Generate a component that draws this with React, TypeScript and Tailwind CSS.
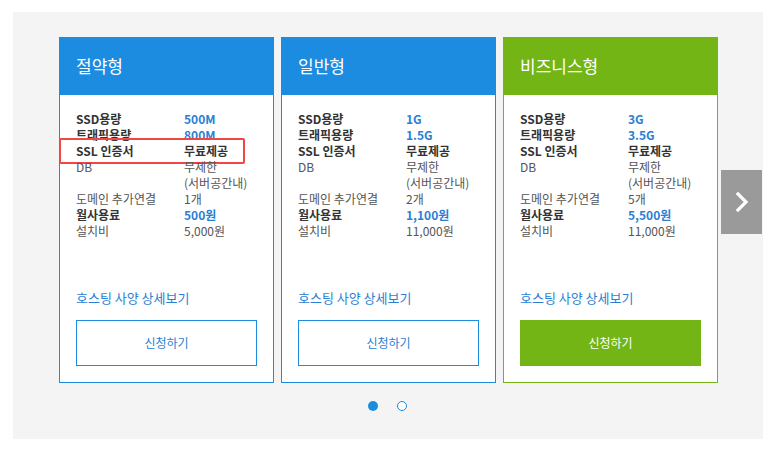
import React from 'react';

type Row = {
  label: string;
  value: string[];
  boldLabel?: boolean;
  valueStyle?: 'blue' | 'dark' | 'normal';
};

type Plan = {
  name: string;
  theme: 'blue' | 'green';
  rows: Row[];
  highlightSsl?: boolean;
};

const plans: Plan[] = [
  {
    name: '절약형',
    theme: 'blue',
    highlightSsl: true,
    rows: [
      { label: 'SSD용량', value: ['500M'], boldLabel: true, valueStyle: 'blue' },
      { label: '트래픽용량', value: ['800M'], boldLabel: true, valueStyle: 'blue' },
      { label: 'SSL 인증서', value: ['무료제공'], boldLabel: true, valueStyle: 'dark' },
      { label: 'DB', value: ['무제한', '(서버공간내)'] },
      { label: '도메인 추가연결', value: ['1개'] },
      { label: '월사용료', value: ['500원'], boldLabel: true, valueStyle: 'blue' },
      { label: '설치비', value: ['5,000원'] },
    ],
  },
  {
    name: '일반형',
    theme: 'blue',
    rows: [
      { label: 'SSD용량', value: ['1G'], boldLabel: true, valueStyle: 'blue' },
      { label: '트래픽용량', value: ['1.5G'], boldLabel: true, valueStyle: 'blue' },
      { label: 'SSL 인증서', value: ['무료제공'], boldLabel: true, valueStyle: 'dark' },
      { label: 'DB', value: ['무제한', '(서버공간내)'] },
      { label: '도메인 추가연결', value: ['2개'] },
      { label: '월사용료', value: ['1,100원'], boldLabel: true, valueStyle: 'blue' },
      { label: '설치비', value: ['11,000원'] },
    ],
  },
  {
    name: '비즈니스형',
    theme: 'green',
    rows: [
      { label: 'SSD용량', value: ['3G'], boldLabel: true, valueStyle: 'blue' },
      { label: '트래픽용량', value: ['3.5G'], boldLabel: true, valueStyle: 'blue' },
      { label: 'SSL 인증서', value: ['무료제공'], boldLabel: true, valueStyle: 'dark' },
      { label: 'DB', value: ['무제한', '(서버공간내)'] },
      { label: '도메인 추가연결', value: ['5개'] },
      { label: '월사용료', value: ['5,500원'], boldLabel: true, valueStyle: 'blue' },
      { label: '설치비', value: ['11,000원'] },
    ],
  },
];

const SpecRow: React.FC<{ row: Row; highlight?: boolean }> = ({ row, highlight }) => {
  const valueClass =
    row.valueStyle === 'blue'
      ? 'font-bold text-[#2a7fd4]'
      : row.valueStyle === 'dark'
      ? 'font-bold text-[#333]'
      : 'text-[#555]';
  return (
    <div className="relative flex">
      {highlight && (
        <div className="absolute left-[-17px] right-[12px] top-[-5px] bottom-[-5px] rounded-[2px] border-2 border-[#f04646]" />
      )}
      <div className={`w-[108px] shrink-0 ${row.boldLabel ? 'font-bold text-[#333]' : 'text-[#555]'}`}>
        {row.label}
      </div>
      <div className={valueClass}>
        {row.value.map((v) => (
          <div key={v}>{v}</div>
        ))}
      </div>
    </div>
  );
};

const PlanCard: React.FC<{ plan: Plan }> = ({ plan }) => {
  const green = plan.theme === 'green';
  return (
    <div
      className={`flex h-[346px] w-[215px] flex-col border bg-white ${
        green ? 'border-[#72b514]' : 'border-[#1c8ce0]'
      }`}
    >
      <div
        className={`flex h-[57px] shrink-0 items-center px-4 pb-[1px] text-[17px] text-white ${
          green ? 'bg-[#72b514]' : 'bg-[#1c8ce0]'
        }`}
      >
        {plan.name}
      </div>
      <div className="flex flex-1 flex-col px-4 pt-[16px] text-[12px] leading-[16px]">
        {plan.rows.map((r) => (
          <SpecRow key={r.label} row={r} highlight={plan.highlightSsl && r.label === 'SSL 인증서'} />
        ))}
        <a className="mt-[51px] text-[13px] leading-[16px] text-[#2a7fd4]">호스팅 사양 상세보기</a>
        <button
          className={`mt-[14px] h-[46px] w-[181px] text-[12px] ${
            green
              ? 'bg-[#72b514] text-white'
              : 'border border-[#1c8ce0] bg-white text-[#2a7fd4]'
          }`}
        >
          신청하기
        </button>
      </div>
    </div>
  );
};

export default function App() {
  return (
    <div
      className="h-[450px] w-[784px] bg-white px-[13px] pt-[12px]"
      style={{ fontFamily: '"Noto Sans CJK KR", "Noto Sans", sans-serif' }}
    >
      <div className="relative h-[427px] w-[750px] bg-[#f4f4f4] pl-[46px] pt-[25px]">
        <div className="flex gap-[7px]">
          {plans.map((p) => (
            <PlanCard key={p.name} plan={p} />
          ))}
        </div>
        <div className="mt-[18px] flex w-[658px] justify-center gap-[19px] pr-[2px]">
          <span className="h-[10px] w-[10px] rounded-full bg-[#1c8ce0]" />
          <span className="h-[10px] w-[10px] rounded-full border-[1.5px] border-[#1c8ce0] bg-white" />
        </div>
        <button className="absolute right-[1px] top-[158px] flex h-[64px] w-[41px] items-center justify-center bg-[#9a9a9a]">
          <svg width="16" height="24" viewBox="0 0 16 24" fill="none">
            <path d="M4 4 L12 12 L4 20" stroke="white" strokeWidth="3.2" strokeLinecap="square" />
          </svg>
        </button>
      </div>
    </div>
  );
}
